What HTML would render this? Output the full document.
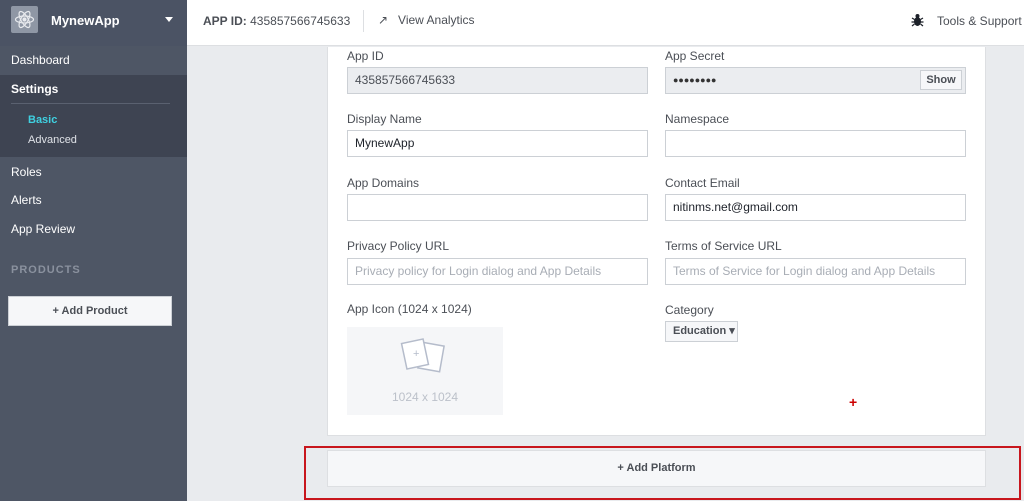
<!DOCTYPE html>
<html><head><style>
*{margin:0;padding:0;box-sizing:border-box}
body{width:1024px;height:501px;overflow:hidden;background:#e9ebee;font-family:"Liberation Sans",Arial,sans-serif;font-size:12px;color:#1d2129;position:relative}
.a{position:absolute}
#side{left:0;top:0;width:187px;height:501px;background:#4e5665}
.nav{position:absolute;left:11px;color:#fff;font-size:12px}
.lbl{position:absolute;color:#4b4f56;font-size:12px}
.in{position:absolute;height:27px;border:1px solid #ccd0d5;background:#fff;padding-left:7px;line-height:25px;font-size:12px}
.ph{color:#a8adb5}
</style></head><body>
<div id="side" class="a">
 <div class="a" style="left:0;top:0;width:187px;height:46px;background:#4b5364"></div>
 <div class="a" style="left:11px;top:6px;width:27px;height:27px;background:#8f97a5;border-radius:2px"></div>
 <svg class="a" style="left:13px;top:8px" width="23" height="23" viewBox="0 0 23 23" fill="none" stroke="#e8eaee" stroke-width="1.2"><ellipse cx="11.5" cy="11.5" rx="9" ry="3.5"/><ellipse cx="11.5" cy="11.5" rx="9" ry="3.5" transform="rotate(60 11.5 11.5)"/><ellipse cx="11.5" cy="11.5" rx="9" ry="3.5" transform="rotate(-60 11.5 11.5)"/><circle cx="11.5" cy="11.5" r="1.5" fill="#e8eaee"/></svg>
 <div class="a" style="left:51px;top:13px;color:#fff;font-weight:bold;font-size:13px">MynewApp</div>
 <div class="a" style="left:165px;top:17px;width:0;height:0;border-left:4px solid transparent;border-right:4px solid transparent;border-top:5px solid #fff"></div>
 <div class="nav" style="top:53px">Dashboard</div>
 <div class="a" style="left:0;top:75px;width:187px;height:82px;background:#3e4452"></div>
 <div class="nav" style="top:82px;font-weight:bold">Settings</div>
 <div class="a" style="left:11px;top:103px;width:159px;height:1px;background:#5a6170"></div>
 <div class="nav" style="left:28px;top:114px;color:#3fd0e0;font-weight:bold;font-size:11px">Basic</div>
 <div class="nav" style="left:28px;top:134px;color:#dfe2e7;font-size:11px">Advanced</div>
 <div class="nav" style="top:165px">Roles</div>
 <div class="nav" style="top:193px">Alerts</div>
 <div class="nav" style="top:222px">App Review</div>
 <div class="nav" style="top:264px;color:#8a919e;font-weight:bold;letter-spacing:1px;font-size:11px">PRODUCTS</div>
 <div class="a" style="left:8px;top:296px;width:164px;height:30px;background:#f6f7f9;border:1px solid #ccd0d5;text-align:center;line-height:28px;font-size:11px;font-weight:bold;color:#4b4f56">+ Add Product</div>
</div>
<div class="a" style="left:187px;top:0;width:837px;height:46px;background:#fff;border-bottom:1px solid #dddfe2"></div>
<div class="a" style="left:203px;top:14px;color:#4b4f56"><b>APP ID:</b> 435857566745633</div>
<div class="a" style="left:363px;top:10px;width:1px;height:22px;background:#dddfe2"></div>
<div class="a" style="left:378px;top:13px;color:#4b4f56">↗&nbsp;&nbsp; View Analytics</div>
<svg class="a" style="left:911px;top:13px" width="13" height="14" viewBox="0 0 13 14" fill="#1d2129"><ellipse cx="6.5" cy="8.5" rx="3.5" ry="4.5"/><circle cx="6.5" cy="3" r="2"/><path d="M1 5l2.5 1.5M12 5L9.5 6.5M0.5 9h3M12.5 9h-3M1 13l2.5-2M12 13l-2.5-2" stroke="#1d2129" stroke-width="1.2"/></svg>
<div class="a" style="left:937px;top:14px;color:#4b4f56">Tools &amp; Support</div>

<div class="a" style="left:327px;top:47px;width:659px;height:389px;background:#fff;border:1px solid #dddfe2;border-top:none"></div>
<div class="lbl" style="left:347px;top:49px">App ID</div>
<div class="in" style="left:347px;top:67px;width:301px;background:#ebedf0;color:#4b4f56">435857566745633</div>
<div class="lbl" style="left:665px;top:49px">App Secret</div>
<div class="in" style="left:665px;top:67px;width:301px;background:#ebedf0;font-size:9px;letter-spacing:0px;color:#333">●●●●●●●●</div>
<div class="a" style="left:920px;top:70px;width:42px;height:20px;background:#f6f7f9;border:1px solid #ccd0d5;font-size:11px;font-weight:bold;color:#4b4f56;text-align:center;line-height:18px">Show</div>
<div class="lbl" style="left:347px;top:112px">Display Name</div>
<div class="in" style="left:347px;top:130px;width:301px">MynewApp</div>
<div class="lbl" style="left:665px;top:112px">Namespace</div>
<div class="in" style="left:665px;top:130px;width:301px"></div>
<div class="lbl" style="left:347px;top:176px">App Domains</div>
<div class="in" style="left:347px;top:194px;width:301px"></div>
<div class="lbl" style="left:665px;top:176px">Contact Email</div>
<div class="in" style="left:665px;top:194px;width:301px">nitinms.net@gmail.com</div>
<div class="lbl" style="left:347px;top:239px">Privacy Policy URL</div>
<div class="in ph" style="left:347px;top:258px;width:301px">Privacy policy for Login dialog and App Details</div>
<div class="lbl" style="left:665px;top:239px">Terms of Service URL</div>
<div class="in ph" style="left:665px;top:258px;width:301px">Terms of Service for Login dialog and App Details</div>
<div class="lbl" style="left:347px;top:302px">App Icon (1024 x 1024)</div>
<div class="a" style="left:347px;top:327px;width:156px;height:88px;background:#f5f6f8"></div>
<svg class="a" style="left:400px;top:338px" width="48" height="40" viewBox="0 0 48 40"><rect x="20" y="6" width="22" height="26" transform="rotate(10 31 19)" fill="#fff" stroke="#b5bccb" stroke-width="1.5"/><rect x="4" y="3" width="22" height="26" transform="rotate(-12 15 16)" fill="#fff" stroke="#b5bccb" stroke-width="1.5"/><text x="13" y="19" font-size="11" fill="#b5bccb" font-family="Liberation Sans">+</text></svg>
<div class="a" style="left:347px;top:390px;width:156px;text-align:center;color:#bcc1ca">1024 x 1024</div>
<div class="lbl" style="left:665px;top:303px">Category</div>
<div class="a" style="left:665px;top:321px;width:73px;height:21px;background:#f6f7f9;border:1px solid #ccd0d5;font-size:11px;font-weight:bold;color:#4b4f56;line-height:19px;padding-left:7px">Education ▾</div>
<div class="a" style="left:849px;top:394px;color:#c00;font-weight:bold;font-size:14px">+</div>

<div class="a" style="left:327px;top:450px;width:659px;height:37px;background:#f6f7f9;border:1px solid #dddfe2;text-align:center;line-height:35px;font-size:11px;font-weight:bold;color:#4b4f56">+ Add Platform</div>
<div class="a" style="left:304px;top:446px;width:717px;height:54px;border:2px solid #c8161d"></div>
</body></html>
